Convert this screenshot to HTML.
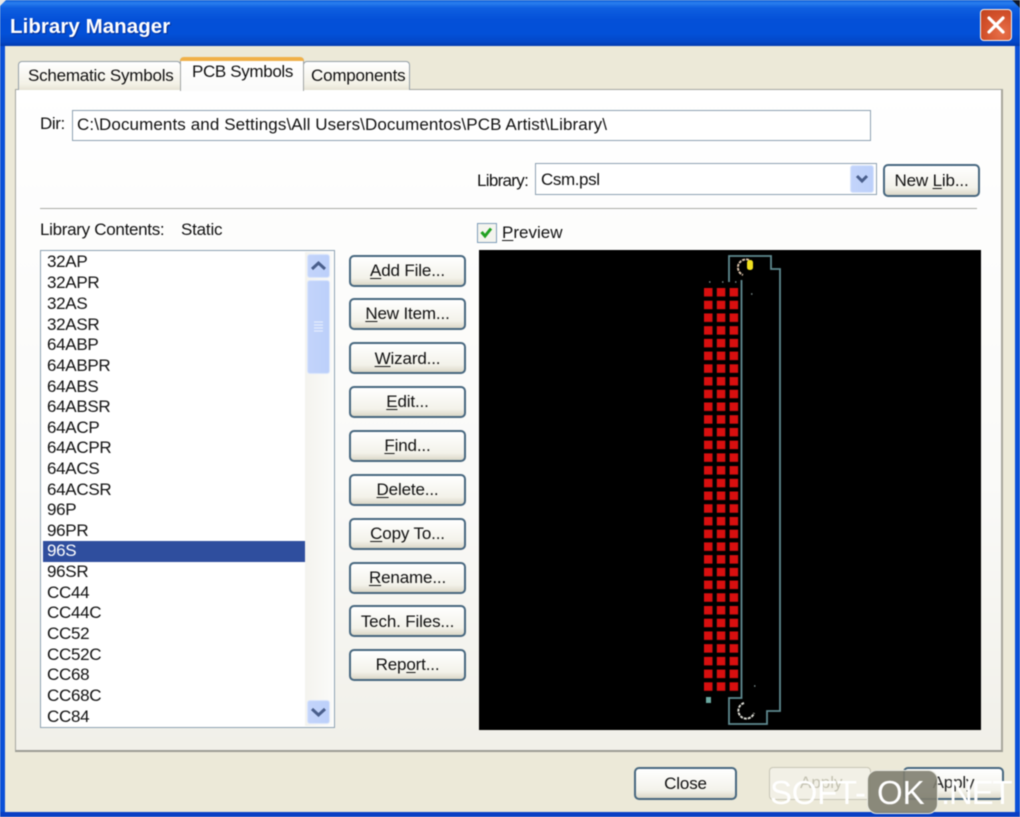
<!DOCTYPE html>
<html><head><meta charset="utf-8"><title>Library Manager</title>
<style>
html,body{margin:0;padding:0;width:1020px;height:817px;overflow:hidden;background:#ece9d8}
body{font-family:"Liberation Sans",sans-serif;font-size:17px;color:#111}
#w{position:absolute;left:0;top:0;width:1020px;height:817px;overflow:hidden;filter:blur(.5px)}
div,span{box-sizing:border-box}
.a{position:absolute}
.t{position:absolute;white-space:nowrap;line-height:20px}
.tab{position:absolute;background:linear-gradient(#fff,#f3f1e6 80%,#e6e3d4);border:1px solid #95a0a8;border-bottom:none;border-radius:4px 4px 0 0}
.btn{position:absolute;left:349px;width:117px;height:32px;border:2px solid #47677f;border-radius:5px;background:linear-gradient(#fff,#f3f2ea 75%,#dcd8c8);text-align:center;line-height:29px;white-space:nowrap;letter-spacing:-.15px}
.sb{position:absolute;background:linear-gradient(90deg,#c3d4fb,#bcd0fa);border-radius:3px;border:1px solid #dbe6fc}
u{text-underline-offset:2px}
.li{position:absolute;left:47px;line-height:20px;white-space:nowrap;letter-spacing:-.3px}
</style></head><body><div id="w">
<div class="a" style="left:0;top:0;width:1020px;height:46px;background:linear-gradient(#0a5ad6 0,#2a7fee 3px,#0f5fe0 8px,#0450d8 20px,#0350d8 34px,#0447c8 42px,#033bb0 46px)"></div>
<div class="a" style="left:0;top:46px;width:5px;height:771px;background:#0a50d8"></div>
<div class="a" style="left:1015px;top:46px;width:5px;height:771px;background:#0a50d8"></div>
<div class="a" style="left:0;top:812px;width:1020px;height:5px;background:#0a3fc4"></div>
<svg class="a" style="left:0;top:0" width="1020" height="8"><path d="M0 0H6L0 6Z" fill="#e8e8e8"/><path d="M1020 0H1012L1020 8Z" fill="#101828"/></svg>
<div class="t" style="left:10px;top:15px;font-size:20.5px;font-weight:bold;color:#fff;line-height:24px;text-shadow:1px 1px 1px #0a2f90;letter-spacing:.05px">Library Manager</div>
<div class="a" style="left:980px;top:9px;width:32px;height:32px;border:1px solid #f4f0ea;border-radius:4px;background:radial-gradient(circle at 70% 75%,#e8704a,#d2502a 60%,#c04420)">
<svg width="30" height="30" style="position:absolute;left:0;top:0"><path d="M8 8L22 22M22 8L8 22" stroke="#fff" stroke-width="3.2" stroke-linecap="round"/></svg></div>

<!-- panel -->
<div class="a" style="left:15px;top:89px;width:988px;height:663px;background:linear-gradient(#fff,#fafaf8 60%,#f1f0e9);border:1px solid #a4a6a0;border-right:2px solid #a8a69c;border-bottom:2px solid #9c9c94"></div>
<!-- tabs -->
<div class="tab" style="left:18px;top:61px;width:163px;height:29px"></div>
<div class="tab" style="left:303px;top:61px;width:107px;height:29px"></div>
<div class="a" style="left:180px;top:57px;width:124px;height:34px;background:linear-gradient(#fff,#fbfbfa);border-left:1px solid #a0a4a4;border-right:1px solid #a0a4a4;border-radius:4px 4px 0 0"></div>
<div class="a" style="left:180px;top:57px;width:124px;height:4px;background:#f0b048;border-radius:4px 4px 0 0"></div>
<div class="t" style="left:28px;top:66px;letter-spacing:-.22px">Schematic Symbols</div>
<div class="t" style="left:192px;top:62px;letter-spacing:-.35px">PCB Symbols</div>
<div class="t" style="left:311px;top:66px;letter-spacing:-.2px">Components</div>

<div class="t" style="left:40px;top:114px;letter-spacing:-.4px">Dir:</div>
<div class="a" style="left:72px;top:110px;width:799px;height:31px;background:#fff;border:1.5px solid #8ea2b2"></div>
<div class="t" style="left:77px;top:115px;letter-spacing:.1px">C:\Documents and Settings\All Users\Documentos\PCB Artist\Library\</div>

<div class="t" style="left:477px;top:171px;letter-spacing:-.7px">Library:</div>
<div class="a" style="left:535px;top:163px;width:342px;height:32px;background:#fff;border:1.5px solid #8ea2b2"></div>
<div class="t" style="left:541px;top:170px;letter-spacing:-.4px">Csm.psl</div>
<div class="sb" style="left:850px;top:165px;width:24px;height:28px">
<svg width="22" height="26" style="position:absolute;left:0;top:0"><path d="M6 10L11 15L16 10" fill="none" stroke="#4a5f8c" stroke-width="3"/></svg></div>
<div class="btn" style="left:883px;top:164px;width:97px;height:33px"><span>New <u>L</u>ib...</span></div>

<div class="a" style="left:40px;top:208px;width:937px;height:1px;background:#a9aba6"></div>
<div class="t" style="left:40px;top:220px;letter-spacing:-.3px">Library Contents:</div>
<div class="t" style="left:181px;top:220px;letter-spacing:-.2px">Static</div>

<div class="a" style="left:477px;top:223px;width:20px;height:20px;background:#f4f4ee;border:1.5px solid #7f9db9">
<svg width="17" height="17" style="position:absolute;left:0;top:0"><path d="M3.5 8L7 12L13 4.5" fill="none" stroke="#21a121" stroke-width="3"/></svg></div>
<div class="t" style="left:502px;top:223px"><u>P</u>review</div>

<!-- list -->
<div class="a" style="left:40px;top:250px;width:295px;height:478px;background:#fff;border:1.5px solid #8ea2b2"></div>
<div class="a" style="left:43px;top:541px;width:262px;height:21px;background:#2f4e9e"></div>
<div class="a" style="left:305px;top:252px;width:28px;height:474px;background:linear-gradient(90deg,#f4f3ee,#fbfbf9)"></div>
<div class="sb" style="left:307px;top:254px;width:23px;height:24px">
<svg width="21" height="22" style="position:absolute;left:0;top:0"><path d="M4 14L10.5 8L17 14" fill="none" stroke="#4a5f8c" stroke-width="3"/></svg></div>
<div class="sb" style="left:307px;top:280px;width:23px;height:94px">
<svg width="21" height="92" style="position:absolute;left:0;top:0"><path d="M6 41H15M6 44H15M6 47H15M6 50H15" stroke="#e4ecfd" stroke-width="1.2"/></svg></div>
<div class="sb" style="left:307px;top:700px;width:23px;height:24px">
<svg width="21" height="22" style="position:absolute;left:0;top:0"><path d="M4 8L10.5 14L17 8" fill="none" stroke="#4a5f8c" stroke-width="3"/></svg></div>

<div class="li" style="top:252px">32AP</div>
<div class="li" style="top:273px">32APR</div>
<div class="li" style="top:294px">32AS</div>
<div class="li" style="top:315px">32ASR</div>
<div class="li" style="top:335px">64ABP</div>
<div class="li" style="top:356px">64ABPR</div>
<div class="li" style="top:377px">64ABS</div>
<div class="li" style="top:397px">64ABSR</div>
<div class="li" style="top:418px">64ACP</div>
<div class="li" style="top:438px">64ACPR</div>
<div class="li" style="top:459px">64ACS</div>
<div class="li" style="top:480px">64ACSR</div>
<div class="li" style="top:500px">96P</div>
<div class="li" style="top:521px">96PR</div>
<div class="li" style="top:541px;color:#fff">96S</div>
<div class="li" style="top:562px">96SR</div>
<div class="li" style="top:583px">CC44</div>
<div class="li" style="top:603px">CC44C</div>
<div class="li" style="top:624px">CC52</div>
<div class="li" style="top:645px">CC52C</div>
<div class="li" style="top:665px">CC68</div>
<div class="li" style="top:686px">CC68C</div>
<div class="li" style="top:707px">CC84</div>

<!-- buttons -->
<div class="btn" style="top:255px;line-height:28px"><u>A</u>dd File...</div>
<div class="btn" style="top:298px;line-height:28px"><u>N</u>ew Item...</div>
<div class="btn" style="top:342px;line-height:29px"><u>W</u>izard...</div>
<div class="btn" style="top:386px;line-height:28px"><u>E</u>dit...</div>
<div class="btn" style="top:430px;line-height:28px"><u>F</u>ind...</div>
<div class="btn" style="top:474px;line-height:28px"><u>D</u>elete...</div>
<div class="btn" style="top:518px;line-height:28px"><u>C</u>opy To...</div>
<div class="btn" style="top:562px;line-height:28px"><u>R</u>ename...</div>
<div class="btn" style="top:605px">Tech. Files...</div>
<div class="btn" style="top:649px;line-height:28px">Rep<u>o</u>rt...</div>

<!-- preview -->
<svg class="a" style="left:479px;top:250px" width="502" height="480" viewBox="479 250 502 480">
<defs><pattern id="p" x="704" y="288" width="12.8" height="12.72" patternUnits="userSpaceOnUse"><rect width="8.5" height="8.5" fill="#d80f0f"/></pattern></defs>
<rect x="479" y="250" width="502" height="480" fill="#000"/>
<rect x="704" y="288" width="35" height="405" fill="url(#p)"/>
<path d="M729 282V256H771V269H780V711H767V724H729V698H741.5V280" fill="none" stroke="#5f8a90" stroke-width="1.8"/>
<path d="M749 260A8 8 0 0 0 743 275" fill="none" stroke="#d8c0a8" stroke-width="2" stroke-dasharray="3 1"/>
<rect x="747" y="260" width="6" height="10" rx="2.5" fill="#f0e020"/>
<path d="M744 703A8 8 0 1 0 754 713" fill="none" stroke="#d8d8d0" stroke-width="2" stroke-dasharray="3 1"/>
<rect x="706" y="697" width="5" height="6" fill="#6aa8a0"/>
<path d="M709 282h1.5M722 282h1.5M735 282h1.5M751 294h1.5M754 686h1.5" stroke="#708080" stroke-width="1.5"/>
</svg>

<!-- bottom -->
<div class="btn" style="left:634px;top:767px;width:103px;height:33px">Close</div>
<div class="a" style="left:769px;top:767px;width:102px;height:33px;border:1.5px solid #c8c6b6;border-radius:4px;background:#f2f0e6"></div>
<div class="t" style="left:800px;top:773px;color:#c4c2b2">Apply</div>
<div class="btn" style="left:903px;top:767px;width:101px;height:33px;color:#222;line-height:28px">Apply</div>

<!-- watermark -->
<div class="a" style="left:867px;top:770px;width:71px;height:44px;background:rgba(128,126,112,.9);border:1px solid #e8e8e0;border-radius:10px"></div>
<div class="t" style="left:770px;top:774px;font-size:33px;line-height:38px;color:#fff;letter-spacing:-.3px">SOFT-</div>
<div class="t" style="left:877px;top:774px;font-size:33px;line-height:38px;color:#fff">OK</div>
<div class="t" style="left:941px;top:774px;font-size:33px;line-height:38px;color:#fff;letter-spacing:-1.2px">.NET</div>
</div></body></html>
